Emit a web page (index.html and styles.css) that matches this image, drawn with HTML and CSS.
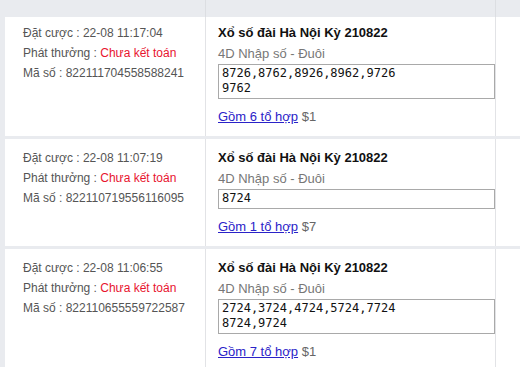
FILE: index.html
```html
<!DOCTYPE html>
<html lang="vi">
<head>
    <meta charset="UTF-8">
    <meta name="viewport" content="width=device-width, initial-scale=1.0">
    <title>Lịch sử cược</title>
    <link rel="stylesheet" href="styles.css">
</head>
<body>
    <div class="bet-list">
        <div class="bet-head">
            <div class="col-info"></div>
            <div class="col-detail"></div>
            <div class="col-extra"></div>
        </div>

        <div class="bet-row first">
            <div class="col-info">
                <div class="line">Đặt cược : 22-08 11:17:04</div>
                <div class="line">Phát thưởng : <span class="status">Chưa kết toán</span></div>
                <div class="line">Mã số : 822111704558588241</div>
            </div>
            <div class="col-detail">
                <div class="title">Xổ số đài Hà Nội Kỳ 210822</div>
                <div class="sub">4D Nhập số - Đuôi</div>
                <div class="numbers">8726,8762,8926,8962,9726<br>9762</div>
                <div class="combo"><a href="#">Gồm 6 tổ hợp</a> <span class="price">$1</span></div>
            </div>
            <div class="col-extra"></div>
        </div>

        <div class="bet-row">
            <div class="col-info">
                <div class="line">Đặt cược : 22-08 11:07:19</div>
                <div class="line">Phát thưởng : <span class="status">Chưa kết toán</span></div>
                <div class="line">Mã số : 822110719556116095</div>
            </div>
            <div class="col-detail">
                <div class="title">Xổ số đài Hà Nội Kỳ 210822</div>
                <div class="sub">4D Nhập số - Đuôi</div>
                <div class="numbers">8724</div>
                <div class="combo"><a href="#">Gồm 1 tổ hợp</a> <span class="price">$7</span></div>
            </div>
            <div class="col-extra"></div>
        </div>

        <div class="bet-row">
            <div class="col-info">
                <div class="line">Đặt cược : 22-08 11:06:55</div>
                <div class="line">Phát thưởng : <span class="status">Chưa kết toán</span></div>
                <div class="line">Mã số : 822110655559722587</div>
            </div>
            <div class="col-detail">
                <div class="title">Xổ số đài Hà Nội Kỳ 210822</div>
                <div class="sub">4D Nhập số - Đuôi</div>
                <div class="numbers">2724,3724,4724,5724,7724<br>8724,9724</div>
                <div class="combo"><a href="#">Gồm 7 tổ hợp</a> <span class="price">$1</span></div>
            </div>
            <div class="col-extra"></div>
        </div>
    </div>
</body>
</html>
```

FILE: styles.css
```css
body {
    margin: 0;
    background-color: #e9ebef;
    font-family: "Liberation Sans", Arial, sans-serif;
    font-size: 12px;
    color: #555;
}
.bet-list {
    padding-left: 5px;
}
.bet-head {
    display: flex;
    height: 17px;
}
.bet-head .col-info,
.bet-head .col-detail {
    border-right: 1px solid #dcdee2;
}
.bet-row {
    display: flex;
    background-color: white;
    margin-bottom: 3px;
}
.col-info {
    width: 201px;
    padding: 9px 0 9px 18px;
    box-sizing: border-box;
    border-right: 1px solid #e2e3e6;
    flex-shrink: 0;
}
.col-detail {
    width: 290px;
    padding: 9px 0 9px 12px;
    box-sizing: border-box;
    border-right: 1px solid #e2e3e6;
    flex-shrink: 0;
}
.col-extra {
    flex: 1;
}
.bet-row.first .col-info,
.bet-row.first .col-detail {
    padding-top: 6px;
}
.line {
    line-height: 20px;
}
.status {
    color: #e8142f;
}
.title {
    font-size: 13px;
    font-weight: bold;
    color: #111;
    line-height: 20px;
}
.sub {
    font-size: 13px;
    color: #777;
    line-height: 21px;
}
.numbers {
    width: 277px;
    box-sizing: border-box;
    border: 1px solid #a9a9a9;
    padding: 1px 3px 2px;
    font-family: "DejaVu Sans Mono", "Liberation Mono", monospace;
    font-size: 12px;
    line-height: 15px;
    color: #111;
}
.combo {
    margin-top: 8px;
    line-height: 20px;
    font-size: 13px;
}
.combo a {
    color: #2a22c8;
}
.price {
    color: #666;
}
```
